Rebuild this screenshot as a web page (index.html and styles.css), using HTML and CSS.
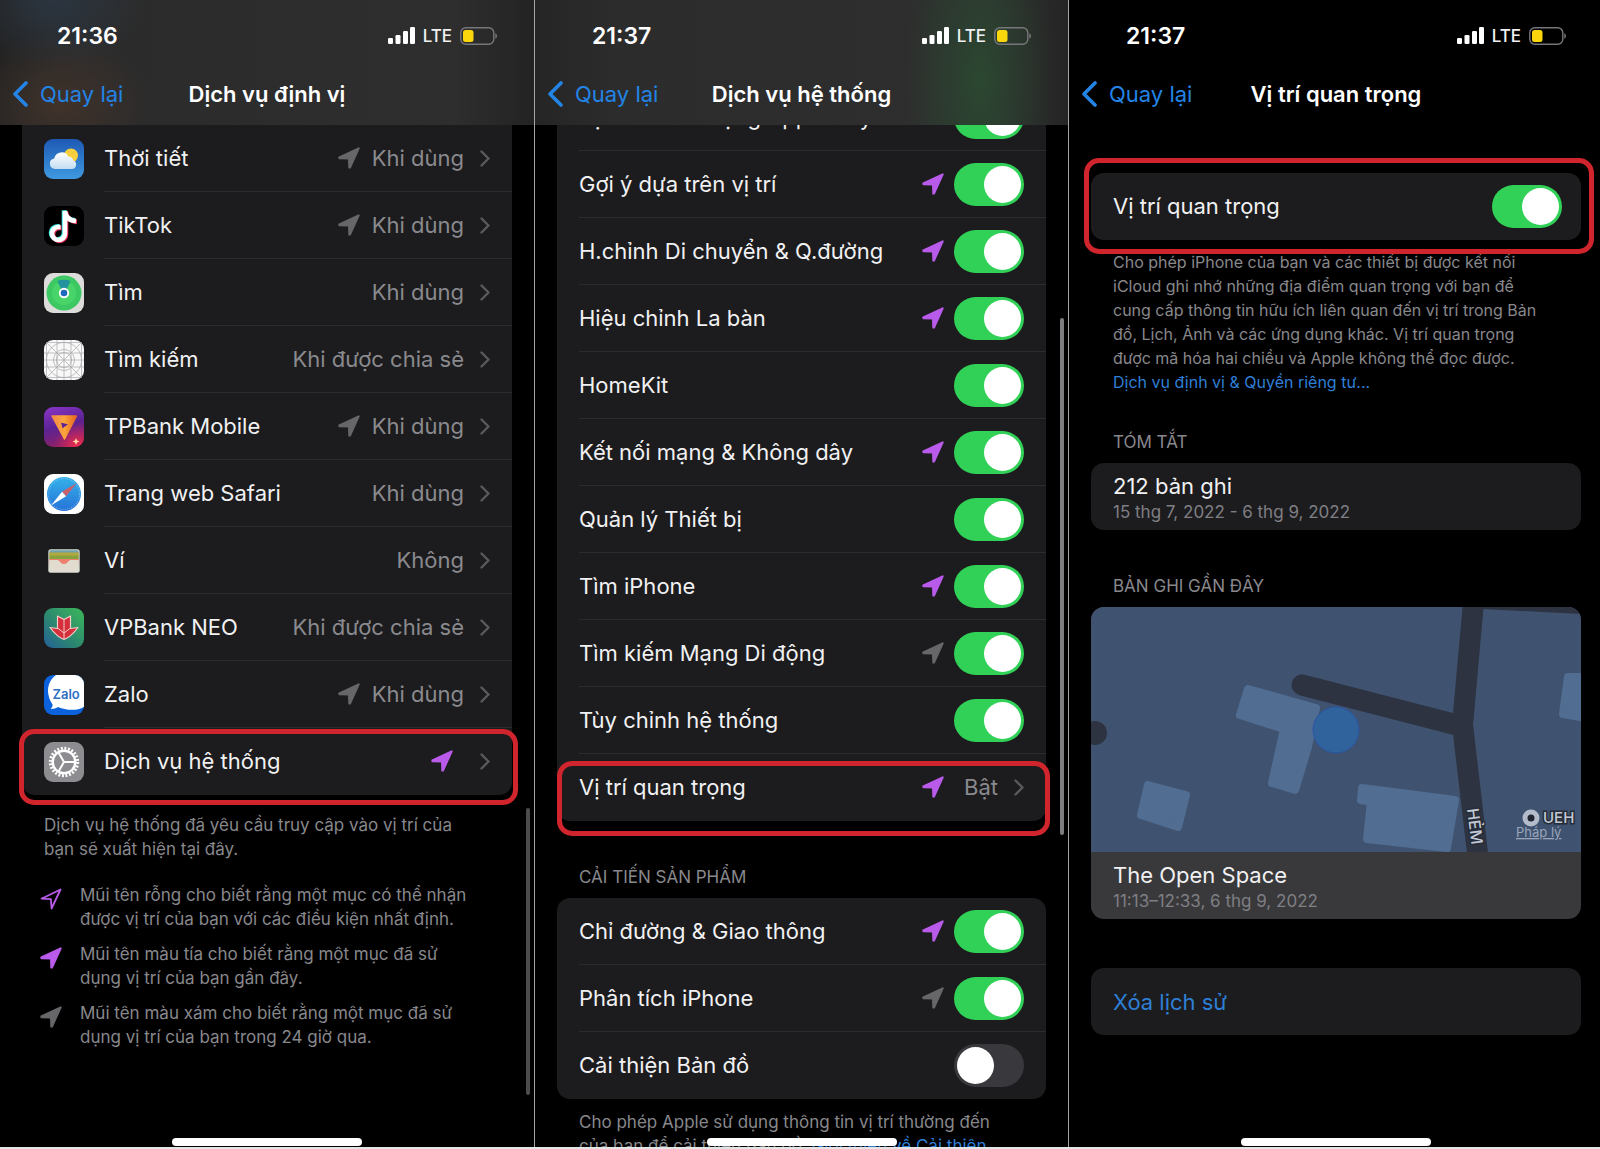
FILE: index.html
```html
<!DOCTYPE html>
<html lang="vi">
<head>
<meta charset="utf-8">
<meta name="viewport" content="width=device-width, initial-scale=1">
<title>Dịch vụ định vị</title>
<link rel="stylesheet" href="styles.css">
</head>
<body>
<svg class="defs" aria-hidden="true">
  <symbol id="arrow" viewBox="0 0 22 22"><path d="M20.700 1.300 1.300 10.500 1.400 11.200 11 11.600 11.300 20.600 12 20.500Z" fill="currentColor" stroke="currentColor" stroke-width="2" stroke-linejoin="round"/></symbol>
  <symbol id="arrow-outline" viewBox="0 0 22 22"><path d="M20.500 1.500 1.500 10.700 10.900 11.200 11.600 20.500Z" fill="none" stroke="currentColor" stroke-width="1.800" stroke-linejoin="round"/></symbol>
  <symbol id="chevron" viewBox="0 0 10 17"><path d="M1.500 1.500 8.500 8.500 1.500 15.500" fill="none" stroke="currentColor" stroke-width="2.400" stroke-linecap="round" stroke-linejoin="round"/></symbol>
  <symbol id="back" viewBox="0 0 16 26"><path d="M14 2 3 13 14 24" fill="none" stroke="currentColor" stroke-width="3.600" stroke-linecap="round" stroke-linejoin="round"/></symbol>
  <symbol id="signal" viewBox="0 0 27 18"><g fill="#fff"><rect x="0" y="11" width="5" height="6" rx="1.300"/><rect x="7.500" y="8" width="5" height="9" rx="1.300"/><rect x="15" y="4" width="5" height="13" rx="1.300"/><rect x="22" y="0" width="5" height="17" rx="1.300"/></g></symbol>
  <symbol id="battery" viewBox="0 0 37 18"><rect x=".8" y=".8" width="33" height="16.400" rx="5" fill="none" stroke="#77777a" stroke-width="1.400"/><path d="M35.300 6.300Q37 7 37 9T35.300 11.700Z" fill="#77777a"/><rect x="3" y="3" width="10.500" height="12" rx="2.500" fill="#fbd60c"/></symbol>
</svg>

<div class="board">
  <section class="phone">
    <header class="bar bar-warm">
      <div class="status"><span class="time">21:36</span><span class="carrier"><svg class="signal"><use href="#signal"/></svg>LTE<svg class="battery"><use href="#battery"/></svg></span></div>
      <nav class="nav"><button class="back"><svg><use href="#back"/></svg>Quay lại</button><h1>Dịch vụ định vị</h1></nav>
    </header>
    <main class="content">
      <div class="card card-open">
        <a class="row app" href="#"><svg class="icon" viewBox="0 0 40 40"><defs><linearGradient id="sky" x2="0" y2="1"><stop stop-color="#1e59b4"/><stop offset="1" stop-color="#3f9ae0"/></linearGradient><linearGradient id="cloud" x2="0" y2="1"><stop stop-color="#fff"/><stop offset="1" stop-color="#c4ddf2"/></linearGradient></defs><rect width="40" height="40" rx="9" fill="url(#sky)"/><circle cx="27" cy="16.500" r="7" fill="#f8cf3e"/><path d="M11 30a5.300 5.300 0 0 1-.8-10.500A7.500 7.500 0 0 1 24.300 17.500a5.200 5.200 0 0 1 5 4A4.400 4.400 0 0 1 28 30Z" fill="url(#cloud)"/></svg><span class="cell"><span class="label">Thời tiết</span><svg class="arrow gray"><use href="#arrow"/></svg><span class="value">Khi dùng</span><svg class="chevron"><use href="#chevron"/></svg></span></a>
        <a class="row app" href="#"><svg class="icon" viewBox="0 0 40 40"><rect width="40" height="40" rx="9" fill="#000"/><g fill="none" stroke-width="4.600"><path d="M21 5v22.500a6.500 6.500 0 1 1-6.500-6.500h2M21 5c.5 6 4.500 9.500 11 10" stroke="#3ee8e4" transform="translate(-1 -.7)"/><path d="M21 5v22.500a6.500 6.500 0 1 1-6.500-6.500h2M21 5c.5 6 4.500 9.500 11 10" stroke="#f0355e" transform="translate(1 .9)"/><path d="M21 5v22.500a6.500 6.500 0 1 1-6.500-6.500h2M21 5c.5 6 4.500 9.500 11 10" stroke="#fff"/></g></svg><span class="cell"><span class="label">TikTok</span><svg class="arrow gray"><use href="#arrow"/></svg><span class="value">Khi dùng</span><svg class="chevron"><use href="#chevron"/></svg></span></a>
        <a class="row app" href="#"><svg class="icon" viewBox="0 0 40 40"><rect width="40" height="40" rx="9" fill="#dddcda"/><circle cx="20" cy="20" r="17.500" fill="#3cc862"/><circle cx="20" cy="20" r="12" fill="#48d468"/><path d="M13.500 8Q20 5.500 26.500 8L22.500 17h-5Z" fill="#22939d"/><circle cx="20" cy="20" r="5.200" fill="#fff"/><circle cx="20" cy="20" r="3.300" fill="#1e68bd"/></svg><span class="cell"><span class="label">Tìm</span><span class="value">Khi dùng</span><svg class="chevron"><use href="#chevron"/></svg></span></a>
        <a class="row app" href="#"><svg class="icon" viewBox="0 0 40 40"><clipPath id="gridclip"><rect width="40" height="40" rx="9"/></clipPath><g clip-path="url(#gridclip)"><rect width="40" height="40" fill="#f8f8f8"/><g fill="none" stroke="#a9a9a9" stroke-width=".7"><circle cx="20" cy="20" r="17.500"/><circle cx="20" cy="20" r="10.500"/><circle cx="20" cy="20" r="7.500"/><path d="M20 0v40M0 20h40M13 0v40M27 0v40M0 13h40M0 27h40M2.500 0v40M37.500 0v40M0 2.500h40M0 37.500h40M2.500 2.500l35 35M37.500 2.500l-35 35"/></g></g></svg><span class="cell"><span class="label">Tìm kiếm</span><span class="value">Khi được chia sẻ</span><svg class="chevron"><use href="#chevron"/></svg></span></a>
        <a class="row app" href="#"><svg class="icon" viewBox="0 0 40 40"><defs><linearGradient id="tp" x2=".3" y2="1"><stop stop-color="#8b35c9"/><stop offset=".55" stop-color="#5b2393"/><stop offset="1" stop-color="#8c2068"/></linearGradient><radialGradient id="tpred" cx=".85" cy="1" r=".6"><stop stop-color="#f02c4a"/><stop offset="1" stop-color="#e02a5c" stop-opacity="0"/></radialGradient><linearGradient id="tpo"><stop stop-color="#f28a4a"/><stop offset=".5" stop-color="#fba53c"/><stop offset="1" stop-color="#e8641e"/></linearGradient></defs><rect width="40" height="40" rx="9" fill="url(#tp)"/><rect width="40" height="40" rx="9" fill="url(#tpred)"/><path fill-rule="evenodd" d="M8 9h24.500L20.500 32ZM16 14.500l2 8 7.500-5.500Z" fill="url(#tpo)" stroke="url(#tpo)" stroke-width="1.500" stroke-linejoin="round"/><path d="M32 31l1 2.500 2.500 1-2.500 1-1 2.500-1-2.500-2.500-1 2.500-1Z" fill="#ffd9a8"/></svg><span class="cell"><span class="label">TPBank Mobile</span><svg class="arrow gray"><use href="#arrow"/></svg><span class="value">Khi dùng</span><svg class="chevron"><use href="#chevron"/></svg></span></a>
        <a class="row app" href="#"><svg class="icon" viewBox="0 0 40 40"><defs><linearGradient id="saf" x2="0" y2="1"><stop stop-color="#35b2ea"/><stop offset="1" stop-color="#2672d8"/></linearGradient></defs><rect width="40" height="40" rx="9" fill="#fff"/><circle cx="20" cy="20" r="17" fill="url(#saf)"/><circle cx="20" cy="20" r="15.500" fill="none" stroke="#9fd0f4" stroke-width="1.200" stroke-dasharray=".5 1.500"/><path d="M33 9 18 17.800l4 4.400Z" fill="#c9606c"/><path d="M7 31.500 18 17.800l4 4.400Z" fill="#fff"/></svg><span class="cell"><span class="label">Trang web Safari</span><span class="value">Khi dùng</span><svg class="chevron"><use href="#chevron"/></svg></span></a>
        <a class="row app" href="#"><svg class="icon" viewBox="0 0 40 40"><clipPath id="wal"><rect x="5.300" y="9.300" width="29.400" height="21.400" rx="2"/></clipPath><rect x="4.300" y="8.300" width="31.400" height="23.400" rx="2.500" fill="#d5dcd4"/><g clip-path="url(#wal)"><path fill="#6fa3ad" d="M5 9h30v3H5z"/><path fill="#b5a83c" d="M5 11.500h30v4H5z"/><path fill="#86a23e" d="M5 14.500h30v4H5z"/><path fill="#ee7f6c" d="M5 18h30v6H5z"/><path fill="#e2dcd0" d="M5 19h8.500c2 0 3 4 6.500 4s4.500-4 6.500-4H35v12H5z"/></g></svg><span class="cell"><span class="label">Ví</span><span class="value">Không</span><svg class="chevron"><use href="#chevron"/></svg></span></a>
        <a class="row app" href="#"><svg class="icon" viewBox="0 0 40 40"><defs><linearGradient id="vp" x1="1" x2="0" y2="1"><stop stop-color="#3cb85a"/><stop offset=".6" stop-color="#2b8472"/><stop offset="1" stop-color="#24619a"/></linearGradient></defs><rect width="40" height="40" rx="9" fill="url(#vp)"/><path d="M20 31.500Q13 29 6 19.500L13.500 20.500V8L20 11.500 26.500 8V20.500L34 19.500Q27 29 20 31.500Z" fill="#d62f3c" stroke="#f3d0ca" stroke-width="1.200" stroke-linejoin="round"/><path d="M20 31V12M20 25l-6.500-5M20 25l6.500-5" fill="none" stroke="#f3c9c4" stroke-width="1"/></svg><span class="cell"><span class="label">VPBank NEO</span><span class="value">Khi được chia sẻ</span><svg class="chevron"><use href="#chevron"/></svg></span></a>
        <a class="row app" href="#"><svg class="icon" viewBox="0 0 40 40"><clipPath id="zc"><rect width="40" height="40" rx="9"/></clipPath><g clip-path="url(#zc)"><rect width="40" height="40" fill="#0b62dc"/><path d="M12 0C5 5 3 13 4.500 20c.8 4.500 2.500 7 4 9.500.3 2-.5 3-2 4.200 3 .4 5.500-.3 7.500-1.700 8 3.500 19 4 26 0V0Z" fill="#fff"/></g><text x="8.500" y="23.500" font-size="13" class="zalo">Zalo</text></svg><span class="cell"><span class="label">Zalo</span><svg class="arrow gray"><use href="#arrow"/></svg><span class="value">Khi dùng</span><svg class="chevron"><use href="#chevron"/></svg></span></a>
        <a class="row app marked mark-a" href="#"><svg class="icon" viewBox="0 0 40 40"><rect width="40" height="40" rx="9" fill="#8d8d91"/><g fill="none" stroke="#fff"><circle cx="20" cy="20" r="13.700" stroke-width="3" stroke-dasharray="1.900 1.686"/><circle cx="20" cy="20" r="11.300" stroke-width="2.400"/><path d="M20 20h11M20 20l-5.500-9.500M20 20l-5.500 9.500" stroke-width="2"/></g></svg><span class="cell"><span class="label">Dịch vụ hệ thống</span><svg class="arrow purple arrow-far"><use href="#arrow"/></svg><svg class="chevron"><use href="#chevron"/></svg></span></a>
      </div>
      <p class="note">Dịch vụ hệ thống đã yêu cầu truy cập vào vị trí của<br>bạn sẽ xuất hiện tại đây.</p>
      <ul class="legend">
        <li><svg class="arrow purple"><use href="#arrow-outline"/></svg><span>Mũi tên rỗng cho biết rằng một mục có thể nhận<br>được vị trí của bạn với các điều kiện nhất định.</span></li>
        <li><svg class="arrow purple"><use href="#arrow"/></svg><span>Mũi tên màu tía cho biết rằng một mục đã sử<br>dụng vị trí của bạn gần đây.</span></li>
        <li><svg class="arrow gray"><use href="#arrow"/></svg><span>Mũi tên màu xám cho biết rằng một mục đã sử<br>dụng vị trí của bạn trong 24 giờ qua.</span></li>
      </ul>
    </main>
    <div class="scroll scroll-low"></div>
    <div class="home"></div>
  </section>

  <section class="phone">
    <header class="bar bar-green">
      <div class="status"><span class="time">21:37</span><span class="carrier"><svg class="signal"><use href="#signal"/></svg>LTE<svg class="battery"><use href="#battery"/></svg></span></div>
      <nav class="nav"><button class="back"><svg><use href="#back"/></svg>Quay lại</button><h1>Dịch vụ hệ thống</h1></nav>
    </header>
    <main class="content scrolled">
      <div class="card card-open">
        <label class="row"><span class="cell"><span class="label">Địa điểm sử dụng Apple Pay</span><input class="switch" type="checkbox" checked></span></label>
        <label class="row"><span class="cell"><span class="label">Gợi ý dựa trên vị trí</span><svg class="arrow purple"><use href="#arrow"/></svg><input class="switch" type="checkbox" checked></span></label>
        <label class="row"><span class="cell"><span class="label">H.chỉnh Di chuyển &amp; Q.đường</span><svg class="arrow purple"><use href="#arrow"/></svg><input class="switch" type="checkbox" checked></span></label>
        <label class="row"><span class="cell"><span class="label">Hiệu chỉnh La bàn</span><svg class="arrow purple"><use href="#arrow"/></svg><input class="switch" type="checkbox" checked></span></label>
        <label class="row"><span class="cell"><span class="label">HomeKit</span><input class="switch" type="checkbox" checked></span></label>
        <label class="row"><span class="cell"><span class="label">Kết nối mạng &amp; Không dây</span><svg class="arrow purple"><use href="#arrow"/></svg><input class="switch" type="checkbox" checked></span></label>
        <label class="row"><span class="cell"><span class="label">Quản lý Thiết bị</span><input class="switch" type="checkbox" checked></span></label>
        <label class="row"><span class="cell"><span class="label">Tìm iPhone</span><svg class="arrow purple"><use href="#arrow"/></svg><input class="switch" type="checkbox" checked></span></label>
        <label class="row"><span class="cell"><span class="label">Tìm kiếm Mạng Di động</span><svg class="arrow gray"><use href="#arrow"/></svg><input class="switch" type="checkbox" checked></span></label>
        <label class="row"><span class="cell"><span class="label">Tùy chỉnh hệ thống</span><input class="switch" type="checkbox" checked></span></label>
        <a class="row marked mark-b" href="#"><span class="cell"><span class="label">Vị trí quan trọng</span><svg class="arrow purple arrow-mid"><use href="#arrow"/></svg><span class="value">Bật</span><svg class="chevron"><use href="#chevron"/></svg></span></a>
      </div>
      <h2>CẢI TIẾN SẢN PHẨM</h2>
      <div class="card">
        <label class="row"><span class="cell"><span class="label">Chỉ đường &amp; Giao thông</span><svg class="arrow purple"><use href="#arrow"/></svg><input class="switch" type="checkbox" checked></span></label>
        <label class="row"><span class="cell"><span class="label">Phân tích iPhone</span><svg class="arrow gray"><use href="#arrow"/></svg><input class="switch" type="checkbox" checked></span></label>
        <label class="row"><span class="cell"><span class="label">Cải thiện Bản đồ</span><input class="switch" type="checkbox"></span></label>
      </div>
      <p class="note note-near">Cho phép Apple sử dụng thông tin vị trí thường đến<br>của bạn để cải thiện Bản đồ. <a href="#">Giới thiệu về Cải thiện</a></p>
    </main>
    <div class="scroll scroll-high"></div>
    <div class="home"></div>
  </section>

  <section class="phone">
    <header class="bar">
      <div class="status"><span class="time">21:37</span><span class="carrier"><svg class="signal"><use href="#signal"/></svg>LTE<svg class="battery"><use href="#battery"/></svg></span></div>
      <nav class="nav"><button class="back"><svg><use href="#back"/></svg>Quay lại</button><h1>Vị trí quan trọng</h1></nav>
    </header>
    <main class="content spaced">
      <div class="card card-wide">
        <label class="row marked mark-c"><span class="cell"><span class="label">Vị trí quan trọng</span><input class="switch" type="checkbox" checked></span></label>
      </div>
      <p class="note note-tight">Cho phép iPhone của bạn và các thiết bị được kết nối<br>iCloud ghi nhớ những địa điểm quan trọng với bạn để<br>cung cấp thông tin hữu ích liên quan đến vị trí trong Bản<br>đồ, Lịch, Ảnh và các ứng dụng khác. Vị trí quan trọng<br>được mã hóa hai chiều và Apple không thể đọc được.<br><a href="#">Dịch vụ định vị &amp; Quyền riêng tư...</a></p>
      <h2>TÓM TẮT</h2>
      <div class="card record"><strong>212 bản ghi</strong><span>15 thg 7, 2022 - 6 thg 9, 2022</span></div>
      <h2>BẢN GHI GẦN ĐÂY</h2>
      <div class="card place">
        <svg class="map" viewBox="0 0 490 245">
          <rect width="490" height="245" fill="#3f5370"/>
          <g fill="#516d92" stroke="#516d92" stroke-width="8" stroke-linejoin="round">
            <path d="M157 82 225 101 217 140 204 183 181 176 193 122 149 108Z"/>
            <path d="M57 178 95 188 87 220 50 208Z"/>
            <path d="M271 181 364 193 356 241 276 232 280 195 270 193Z"/>
            <path d="M477 70H500V112L472 107Z"/>
          </g>
          <g fill="none" stroke="#2d3341" stroke-width="21"><path d="M211 78 370 119" stroke-linecap="round"/><path d="M382.500-5 371.500 118 387 250" stroke-linejoin="round"/></g>
          <path d="M392 0H490V7L392 2Z" fill="#2d3341"/>
          <circle cx="4" cy="126" r="12" fill="#2d3341"/>
          <circle cx="245" cy="123" r="23" fill="#30629b" stroke="#2c55a5" stroke-width="1"/>
          <circle cx="440" cy="211" r="6" fill="#20252f" stroke="#b4bccb" stroke-width="5"/>
          <g class="map-text"><text x="452" y="216" font-size="15">UEH</text><text font-size="16" transform="translate(376 202) rotate(83)">HẺM</text></g>
          <a href="#"><text class="legal" x="425" y="230" font-size="13">Pháp lý</text></a>
        </svg>
        <div class="record"><strong>The Open Space</strong><span>11:13–12:33, 6 thg 9, 2022</span></div>
      </div>
      <button class="card clear">Xóa lịch sử</button>
    </main>
    <div class="home"></div>
  </section>
</div>
</body>
</html>
```

FILE: styles.css
```css
* { box-sizing: border-box; }

body {
  margin: 0;
  overflow: hidden;
  background: #000;
  color: #f1f1f3;
  font-family: Inter, "Noto Sans", sans-serif;
  font-size: 22px;
  line-height: 28px;
}

a { color: inherit; text-decoration: none; }
button { font: inherit; border: 0; padding: 0; background: none; cursor: pointer; }
h1, h2, p, ul { margin: 0; padding: 0; font-weight: 400; }
.defs { position: absolute; width: 0; height: 0; }

.board {
  display: grid;
  grid-template-columns: 535fr 534fr 534fr;
  width: calc(100% + 3px);
  border-bottom: 2px solid #e4e4e4;
}

.phone {
  position: relative;
  height: calc(100vh - 2px);
  overflow: hidden;
  background: #000;
}
.phone:not(:last-child) { border-right: 1px solid #a4a4a4; }

/* status and navigation bar */
.bar {
  position: relative;
  z-index: 2;
  height: 125px;
  padding-top: 21px;
}
.bar-warm {
  background:
    radial-gradient(ellipse 90px 70px at 55px 0, #2b3540, transparent),
    radial-gradient(ellipse 90px 70px at 60px 104px, #40322a, transparent),
    linear-gradient(90deg, #222, #2b2b2b 15%, #2e2e2e 85%, #232323);
}
.bar-green {
  background:
    radial-gradient(ellipse 75px 190px at 445px 80px, #2b4731, transparent),
    linear-gradient(90deg, #252525, #2c2c2c 15%, #2e2e2e 85%, #252525);
}
.status {
  display: flex;
  justify-content: space-between;
  align-items: center;
  height: 30px;
  padding: 0 37px 0 57px;
}
.time { font-size: 23px; font-weight: 600; color: #fff; }
.carrier { display: flex; align-items: center; gap: 8px; font-size: 17px; font-weight: 500; }
.signal { width: 27px; height: 18px; }
.battery { width: 37px; height: 18px; }
.nav {
  display: grid;
  grid-template-columns: 1fr auto 1fr;
  align-items: center;
  height: 46px;
  margin-top: 20px;
  padding: 0 12px;
}
.back { display: flex; align-items: center; gap: 12px; color: #2384e6; }
.back svg { width: 16px; height: 26px; }
.nav h1 { font-size: 22px; font-weight: 600; color: #fff; }

/* lists */
.content { padding: 0 22px; }
.scrolled { margin-top: -41px; }
.spaced { padding-top: 48px; }
.card { background: #1c1c1e; border-radius: 13px; }
.card-open { border-radius: 0 0 13px 13px; }
.row {
  position: relative;
  display: flex;
  align-items: center;
  gap: 20px;
  height: 67px;
  padding-left: 22px;
}
.icon { width: 40px; height: 40px; flex: none; }
.cell {
  display: flex;
  flex: 1;
  align-items: center;
  height: 100%;
  padding-right: 22px;
  border-bottom: 1px solid #2c2c2e;
}
.card-wide .cell { padding-right: 19px; }
.row:last-child .cell { border-bottom-color: transparent; }
.label { flex: 1; white-space: nowrap; }
.value { color: #8a8a8e; }
.arrow { width: 22px; height: 22px; margin-right: 12px; flex: none; }
.arrow-mid { margin-right: 20px; }
.arrow-far { margin-right: 27px; }
.gray { color: #67676a; }
.purple { color: #b95bea; }
.chevron { width: 10px; height: 17px; color: #5a5a5e; flex: none; }
.value + .chevron { margin-left: 16px; }

.switch {
  appearance: none;
  display: flex;
  align-items: center;
  width: 70px;
  height: 43px;
  margin: 0;
  padding: 0 3px;
  border-radius: 22px;
  background: #39393d;
}
.switch::before { content: ""; width: 37px; height: 37px; border-radius: 50%; background: #fff; }
.switch:checked { justify-content: flex-end; background: #31d158; }
.arrow:has(+ .switch) { margin-right: 10px; }

.marked::after {
  content: "";
  position: absolute;
  border: 5px solid #d1252d;
  border-radius: 15px;
  pointer-events: none;
}
.mark-a::after { inset: 1px -6px -10px -3px; }
.mark-b::after { inset: 7px -4px -15px 0; }
.mark-c::after { inset: -15px -13px -14px -7px; }

.note, .legend { color: #88888c; font-size: 17px; line-height: 24px; white-space: nowrap; }
.note { padding: 18px 22px 0; }
.note-near { padding-top: 11px; }
.note-tight { padding-top: 10px; font-size: 16px; }
.note a { color: #2e7fd6; }
.legend { display: grid; gap: 11px; margin-top: 22px; padding-left: 18px; list-style: none; }
.legend li { display: flex; gap: 6px; }
.legend .arrow { margin-top: 5px; }

h2 { padding: 43px 22px 8px; color: #88888c; font-size: 17px; line-height: 26px; }
.note + h2 { padding-top: 35px; }

.record { display: flex; flex-direction: column; height: 67px; padding: 9px 22px; }
.record strong { font-weight: 400; }
.record span { color: #7f7f84; font-size: 17px; line-height: 24px; }
.place { overflow: hidden; background: #39393b; }
.map { display: block; width: 100%; }
.map-text { fill: #c3cad6; stroke: #262c38; stroke-width: 3px; paint-order: stroke; font-weight: 500; }
.legal { fill: #98a5ba; text-decoration: underline; }
.zalo { fill: #2e6fc4; font-weight: 600; }
.clear { display: block; width: 100%; height: 67px; margin-top: 49px; padding: 0 22px; color: #2e7fd6; text-align: left; }

/* overlays */
.scroll { position: absolute; right: 4px; width: 4px; border-radius: 2px; }
.scroll-low { top: 808px; height: 287px; background: #4c4c4e; }
.scroll-high { top: 318px; height: 517px; background: #7c7c7e; }
.home {
  position: absolute;
  z-index: 3;
  bottom: 1px;
  left: 50%;
  width: 190px;
  height: 8px;
  margin-left: -95px;
  border-radius: 4px;
  background: #fff;
}
```
